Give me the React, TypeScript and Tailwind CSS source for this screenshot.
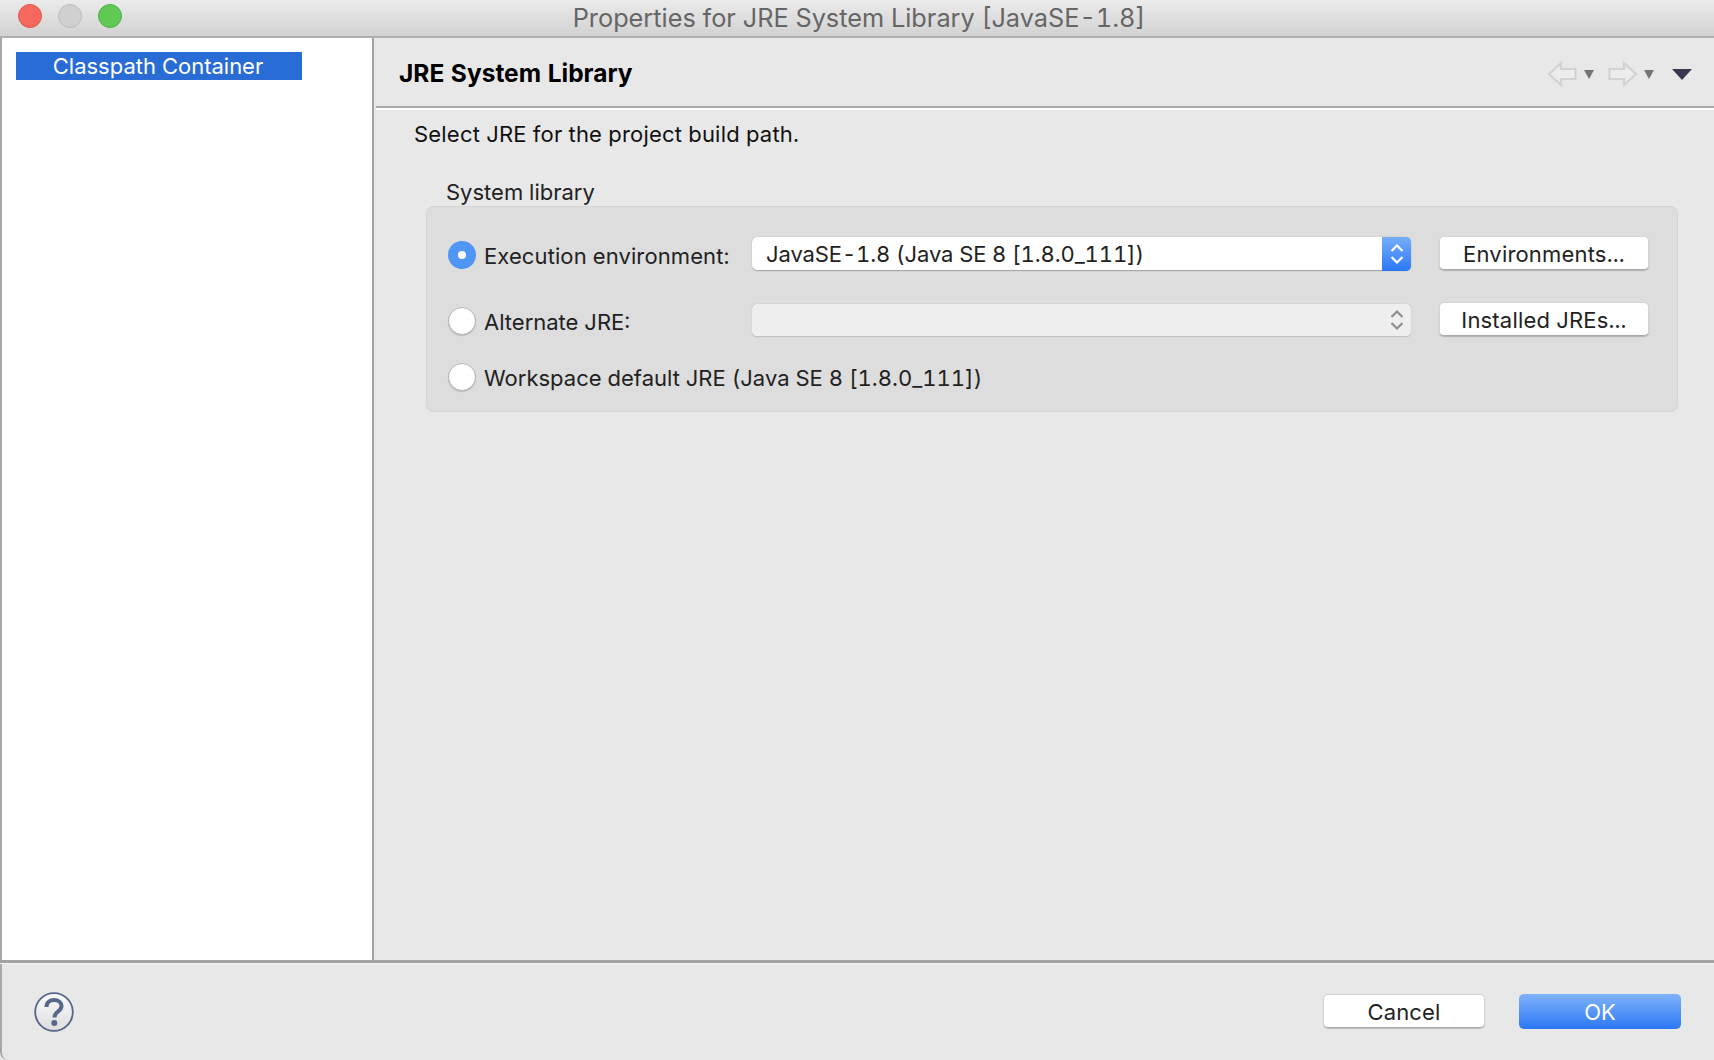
const font = "font-['Inter','Liberation_Sans',sans-serif]";

function Radio({ checked }: { checked?: boolean }) {
  if (checked) {
    return (
      <span className="mt-[2px] flex h-[28px] w-[28px] shrink-0 items-center justify-center rounded-full bg-[#4f96f7]">
        <span className="h-[8px] w-[8px] rounded-full bg-white" />
      </span>
    );
  }
  return <span className="mt-[2px] h-[28px] w-[28px] shrink-0 rounded-full border border-[#b4b4b4] bg-white shadow-[0_1px_1px_rgba(0,0,0,0.15)]" />;
}

function Chevrons({ color }: { color: string }) {
  return (
    <svg width="14" height="22" viewBox="0 0 14 22" fill="none" stroke={color} strokeWidth="2.2">
      <path d="M1.5 8 L7 2.5 L12.5 8" />
      <path d="M1.5 14 L7 19.5 L12.5 14" />
    </svg>
  );
}

function PushButton({ label, className }: { label: string; className: string }) {
  return (
    <button className={`flex items-center justify-center rounded-[5px] border border-[#d4d4d4] border-b-[#a8a8a8] bg-white pt-[2px] text-[22px] leading-none tracking-[0.18px] text-[#222] shadow-[0_1px_1px_rgba(0,0,0,0.2)] ${className}`}>
      {label}
    </button>
  );
}

function SmallTriangle() {
  return (
    <svg width="10" height="9" viewBox="0 0 10 9">
      <path d="M0 0 H10 L5 9 Z" fill="#757575" />
    </svg>
  );
}

export default function App() {
  return (
    <div className={`flex h-[1060px] w-[1714px] flex-col overflow-hidden bg-[#e8e8e8] tabular-nums ${font}`}>
      {/* Title bar */}
      <div className="relative flex h-[38px] shrink-0 items-center justify-center border-b-2 border-[#b0b0b0] bg-gradient-to-b from-[#ebebeb] to-[#d2d2d2]">
        <div className="absolute left-[18px] top-[4px] flex gap-[16px]">
          <span className="h-[24px] w-[24px] rounded-full border border-[#e0584f] bg-[#f5695f]" />
          <span className="h-[24px] w-[24px] rounded-full border border-[#bcbcbc] bg-[#d0d0d0]" />
          <span className="h-[24px] w-[24px] rounded-full border border-[#4eb344] bg-[#60c853]" />
        </div>
        <span className="ml-[4px] text-[25.3px] leading-none text-[#666]">Properties for JRE System Library [JavaSE-1.8]</span>
      </div>

      {/* Main */}
      <div className="flex min-h-0 flex-1 border-l-2 border-[#a8a8a8]">
        <div className="w-[372px] shrink-0 border-r-2 border-[#a2a2a2] bg-white pl-[14px] pt-[14px]">
          <div className="flex h-[28px] w-[286px] items-center justify-center bg-[#2a6cd6] pr-[2px] text-[22px] leading-none text-white">
            Classpath Container
          </div>
        </div>

        <div className="flex min-w-0 flex-1 flex-col pl-[2px]">
          {/* Page header */}
          <div className="flex h-[70px] shrink-0 items-center justify-between border-b-2 border-[#a8a8a8] pl-[23px] pr-[22px] pt-[2px]">
            <span className="text-[24.5px] font-bold leading-none text-black">JRE System Library</span>
            <div className="mt-[2px] flex items-center">
              <svg width="30" height="26" viewBox="0 0 30 26" fill="#ececec" stroke="#d2d2d2" strokeWidth="2.2">
                <path d="M14 2 L2 13 L14 24 V18 H28.5 V8 H14 Z" />
              </svg>
              <span className="ml-[7px]"><SmallTriangle /></span>
              <svg className="ml-[14px]" width="30" height="26" viewBox="0 0 30 26" fill="#ececec" stroke="#d2d2d2" strokeWidth="2.2">
                <path d="M16 2 L28 13 L16 24 V18 H1.5 V8 H16 Z" />
              </svg>
              <span className="ml-[6px]"><SmallTriangle /></span>
              <svg className="ml-[18px]" width="20" height="11" viewBox="0 0 20 11">
                <path d="M0 0 H20 L10 11 Z" fill="#3d3550" />
              </svg>
            </div>
          </div>
          <div className="h-[2px] shrink-0 bg-white" />

          {/* Page body */}
          <div className="flex flex-1 flex-col pl-[38px] pr-[36px]">
            <div className="mt-[11px] text-[22px] leading-[26px] tracking-[0.2px] text-[#111]">Select JRE for the project build path.</div>

            <div className="ml-[12px] mt-[32px] flex flex-col">
              <div className="pl-[20px] text-[22px] leading-[26px] text-[#222]">System library</div>
              <div className="mt-[1px] h-[206px] rounded-[7px] border border-[#d6d6d6] bg-[#dddddd] pl-[21px] pr-[28px]">
                <div className="mt-[30px] flex h-[34px] items-center">
                  <Radio checked />
                  <span className="ml-[8px] mt-[4px] w-[268px] text-[22px] leading-none tracking-[0.1px] text-[#222]">Execution environment:</span>
                  <div className="flex h-[34px] w-[659px] items-center rounded-[5px] border-b border-[#a8a8a8] bg-white pl-[14px] shadow-[0_0_1px_rgba(0,0,0,0.4)]">
                    <span className="flex-1 pt-[1px] text-[22px] leading-none tracking-[-0.1px] text-[#222]">JavaSE-1.8 (Java SE 8 [1.8.0_111])</span>
                    <span className="flex h-[34px] w-[29px] items-center justify-center rounded-r-[5px] bg-gradient-to-b from-[#76aef8] to-[#2a76f5]">
                      <Chevrons color="#ffffff" />
                    </span>
                  </div>
                  <PushButton label="Environments..." className="mb-[2px] ml-[28px] h-[34px] w-[210px]" />
                </div>
                <div className="mt-[32px] flex h-[34px] items-center">
                  <Radio />
                  <span className="ml-[8px] mt-[4px] w-[268px] text-[22px] leading-none text-[#222]">Alternate JRE:</span>
                  <div className="flex h-[33px] w-[659px] items-center justify-end rounded-[5px] border-b border-[#c2c2c2] bg-[#eeeeee] pr-[7px] shadow-[0_0_1px_rgba(0,0,0,0.25)]">
                    <Chevrons color="#8e8e8e" />
                  </div>
                  <PushButton label="Installed JREs..." className="mb-[2px] ml-[28px] h-[34px] w-[210px]" />
                </div>
                <div className="mt-[26px] flex h-[28px] items-center">
                  <span className="h-[28px] w-[28px] shrink-0 rounded-full border border-[#b4b4b4] bg-white shadow-[0_1px_1px_rgba(0,0,0,0.15)]" />
                  <span className="ml-[8px] mt-[2px] text-[22px] leading-none tracking-[0.01px] text-[#222]">Workspace default JRE (Java SE 8 [1.8.0_111])</span>
                </div>
              </div>
            </div>
          </div>
        </div>
      </div>

      {/* Footer */}
      <div className="h-[3px] shrink-0 bg-[#a2a2a2]" />
      <div className="h-[1px] shrink-0 bg-[#f6f6f6]" />
      <div className="flex h-[96px] shrink-0 items-center justify-between rounded-b-[8px] border-l-2 border-[#a8a8a8] pl-[32px] pr-[33px]">
        <svg width="40" height="40" viewBox="0 0 40 40">
          <defs>
            <linearGradient id="helpFill" x1="0" y1="0" x2="0" y2="1">
              <stop offset="0" stopColor="#fafafa" />
              <stop offset="1" stopColor="#dedede" />
            </linearGradient>
          </defs>
          <circle cx="20" cy="20" r="18.8" fill="url(#helpFill)" stroke="#56678a" strokeWidth="1.8" />
          <path d="M12.5 15 C12.5 10.5 16 8 20 8 C24.5 8 27.5 10.5 27.5 14 C27.5 17 25.5 18.5 23.5 20 C21.5 21.5 20.5 22.5 20.5 25.5" fill="none" stroke="#56678a" strokeWidth="4" />
          <circle cx="20.3" cy="31" r="3" fill="#56678a" />
        </svg>
        <div className="mb-[2px] flex items-center">
          <PushButton label="Cancel" className="h-[34px] w-[162px]" />
          <button className="ml-[34px] flex h-[35px] w-[162px] items-center justify-center rounded-[5px] bg-gradient-to-b from-[#7fb2f9] to-[#2a76f5] pt-[2px] text-[22px] leading-none text-white">
            OK
          </button>
        </div>
      </div>
    </div>
  );
}
